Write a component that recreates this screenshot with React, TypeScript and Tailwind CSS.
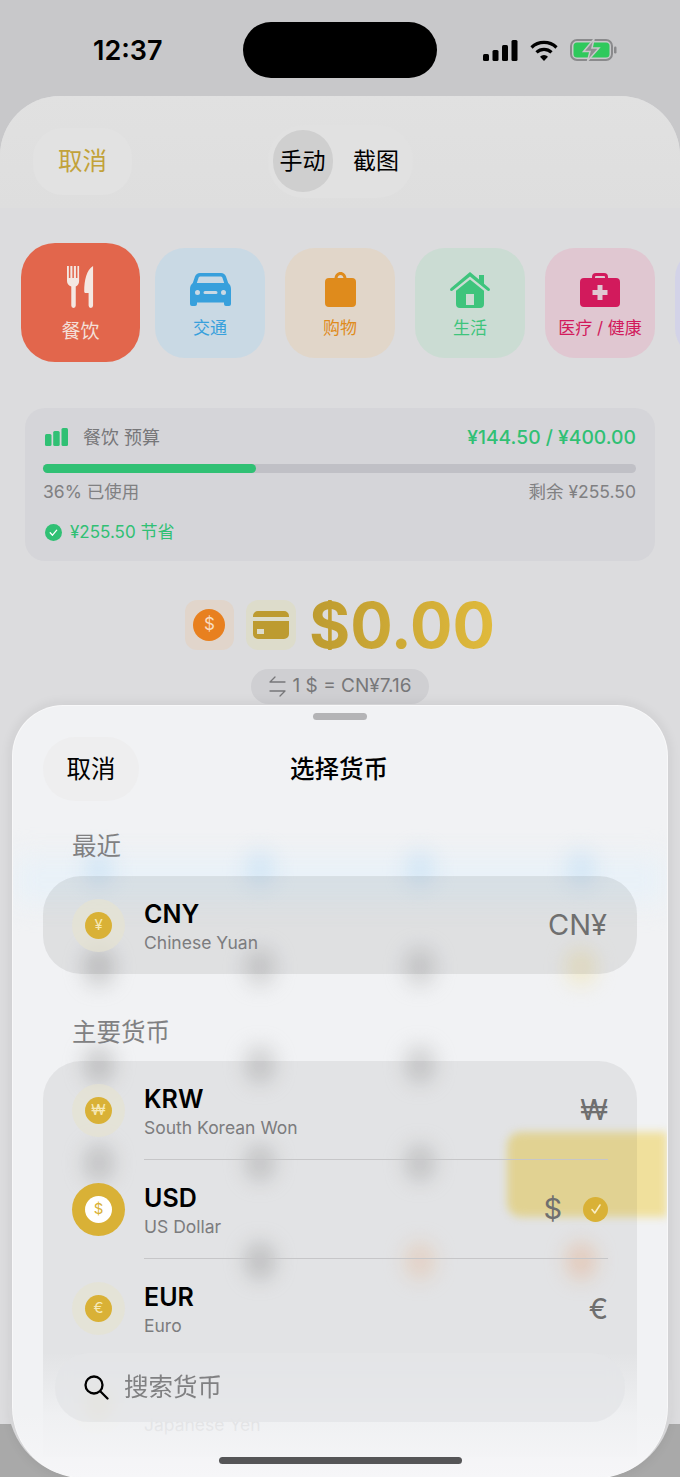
import React from 'react';

const font = "font-['Inter','Noto_Sans_CJK_SC',sans-serif]";

type Currency = { code: string; name: string; symbol: string; selected?: boolean };

const currencies: Currency[] = [
    { code: 'KRW', name: 'South Korean Won', symbol: '₩' },
    { code: 'USD', name: 'US Dollar', symbol: '$', selected: true },
    { code: 'EUR', name: 'Euro', symbol: '€' },
    { code: '', name: 'Japanese Yen', symbol: '' },
];

const blobs = [
    'bg-[#bcdcf4]', 'bg-[#bcdcf4]', 'bg-[#bcdcf4]', 'bg-[#bcdcf4]',
    'bg-[#a0a0a0]', 'bg-[#b0b0b0]', 'bg-[#b0b0b0]', 'bg-[#f0e0a0]',
    'bg-[#a0a0a0]', 'bg-[#a8a8a8]', 'bg-[#a8a8a8]', 'bg-transparent',
    'bg-[#a8a8a8]', 'bg-[#a8a8a8]', 'bg-[#a8a8a8]', 'bg-transparent',
    'bg-transparent', 'bg-[#a0a0a0]', 'bg-[#f5c8a8]', 'bg-[#f5b890]',
];

const ForkKnife = () => (
    <svg width="27" height="42" viewBox="0 0 29 42" fill="#f4e8e2" preserveAspectRatio="none">
        <path d="M0 0h2v12h1.6V0h2.2v12h1.6V0h2.2v12h1.6V0H13v15c0 3-1.6 4.8-3.6 5.6V39.500a2.400 2.400 0 0 1-4.800 0V20.600C2 19.800 0 18 0 15z" />
        <path d="M28 0v39.500a2.400 2.400 0 0 1-4.800 0V27h-3.200c-1 0-1.500-.6-1.500-1.500C18.500 14 21 4 28 0z" />
    </svg>
);

const Car = () => (
    <svg width="41" height="33" viewBox="0 0 41 33" fill="#37a0dc">
        <path fillRule="evenodd" d="M10 0h21c2.500 0 4 1.200 5 3.500L38.200 10c1.800 1.400 2.800 3.500 2.800 6v15a2 2 0 0 1-2 2h-3a2 2 0 0 1-2-2v-1.500H7V31a2 2 0 0 1-2 2H2a2 2 0 0 1-2-2V16c0-2.500 1-4.600 2.800-6L5 3.500C6 1.200 7.500 0 10 0zm.5 3.500c-1 0-1.700.5-2 1.500L6.800 10h27.400L32.500 5c-.3-1-1-1.500-2-1.500zM7.500 17a2.500 2.500 0 1 0 0 5 2.500 2.500 0 0 0 0-5zm26 0a2.500 2.500 0 1 0 0 5 2.500 2.500 0 0 0 0-5zM15 18a1.500 1.500 0 0 0 0 3h11a1.500 1.500 0 0 0 0-3z" />
    </svg>
);

const Bag = () => (
    <svg width="31" height="35" viewBox="0 0 31 35" fill="#df8b1c">
        <path fillRule="evenodd" d="M9.500 6C10 2.500 12.300 0 15.500 0s5.500 2.500 6 6H27a4 4 0 0 1 4 4v21a4 4 0 0 1-4 4H4a4 4 0 0 1-4-4V10a4 4 0 0 1 4-4zm3 0h6c-.4-1.700-1.500-3-3-3s-2.600 1.300-3 3z" />
    </svg>
);

const House = () => (
    <svg width="40" height="36" viewBox="0 0 40 36" fill="#3ec47c">
        <path d="M20 0l9 7.500V3h5v8.700l5.300 4.500c.8.700.9 1.700.3 2.300-.6.700-1.600.7-2.300.1L20 4.500 2.700 18.600c-.7.600-1.700.6-2.300-.1-.6-.6-.5-1.600.3-2.300z" />
        <path fillRule="evenodd" d="M20 7.500l14 11.300V32a4 4 0 0 1-4 4H10a4 4 0 0 1-4-4V18.800zM16 22v11h8V22z" />
    </svg>
);

const Medical = () => (
    <svg width="40" height="34" viewBox="0 0 40 34" fill="#d21a5c">
        <path fillRule="evenodd" d="M12 5V4a4 4 0 0 1 4-4h8a4 4 0 0 1 4 4v1h8a4 4 0 0 1 4 4v21a4 4 0 0 1-4 4H4a4 4 0 0 1-4-4V9a4 4 0 0 1 4-4zm3 0h10V4a1 1 0 0 0-1-1h-8a1 1 0 0 0-1 1zm2.500 7v5h-5v5h5v5h5v-5h5v-5h-5v-5z" />
    </svg>
);

const tiles = [
    { label: '交通', icon: <Car />, bg: 'bg-[#c9d9e4]', text: 'text-[#37a0dc]' },
    { label: '购物', icon: <Bag />, bg: 'bg-[#e1d6c9]', text: 'text-[#df8b1c]' },
    { label: '生活', icon: <House />, bg: 'bg-[#cbdcd3]', text: 'text-[#3ec47c]' },
    { label: '医疗 / 健康', icon: <Medical />, bg: 'bg-[#e0c7d1]', text: 'text-[#d21a5c]' },
    { label: '', icon: null, bg: 'bg-[#d3d3e8]', text: 'text-[#6060d0]' },
];

const Coin = ({ symbol, selected }: { symbol: string; selected?: boolean }) => (
    <div className={`flex h-[53px] w-[53px] shrink-0 items-center justify-center rounded-full ${selected ? 'bg-[#d9b136]' : 'bg-[#e6e3d2]/70'}`}>
        <div className={`flex h-[27px] w-[27px] items-center justify-center rounded-full text-[15px] ${selected ? 'bg-white text-[#d9b136]' : 'bg-[#d9b136] text-[#f6e9b8]'}`}>
            {symbol}
        </div>
    </div>
);

const CurrencyRow = ({ currency, last }: { currency: Currency; last?: boolean }) => (
    <div className="flex h-[99px] items-center gap-[19px] pl-[29px] pr-[29px]">
        <Coin symbol={currency.symbol} selected={currency.selected} />
        <div className={`flex h-full flex-1 items-center justify-between ${last ? '' : 'border-b border-[#c6c6c8]'}`}>
            <div className="flex flex-col pt-[6px]">
                <span className="h-[29px] text-[25px] font-semibold leading-[29px] text-black">{currency.code}</span>
                <span className="text-[17.500px] leading-[28px] text-[#7c7c7e]">{currency.name}</span>
            </div>
            <div className="flex items-center gap-[21px]">
                <span className="text-[29px] text-[#6f6f6f]">{currency.symbol}</span>
                {currency.selected && (
                    <div className="flex h-[25px] w-[25px] items-center justify-center rounded-full bg-[#d9b136]">
                        <svg width="14" height="14" viewBox="0 0 14 14" fill="none" stroke="#f8edc4" strokeWidth="1.600" strokeLinecap="round" strokeLinejoin="round">
                            <path d="M3 7.500l2.800 3.500L11 3" />
                        </svg>
                    </div>
                )}
            </div>
        </div>
    </div>
);

const App: React.FC = () => {
    return (
        <div className={`relative flex h-[1477px] w-[680px] flex-col overflow-hidden bg-[#a9a9a9] ${font}`}>
            <div className="bg-[#c8c8ca]">
                {/* Status bar */}
                <div className="flex h-[96px] items-start pl-[93px] pr-[63px] pt-[22px]">
                    <span className="w-[150px] text-[27px] font-semibold leading-[58px] text-black">12:37</span>
                    <div className="h-[56px] w-[194px] rounded-[28px] bg-black" />
                    <div className="ml-auto flex h-[56px] items-center gap-[12px]">
                        <svg width="35" height="21" viewBox="0 0 35 21" fill="#000">
                            <rect x="0" y="14" width="6" height="7" rx="1.500" />
                            <rect x="9.500" y="10" width="6" height="11" rx="1.500" />
                            <rect x="19" y="5" width="6" height="16" rx="1.500" />
                            <rect x="28.500" y="0" width="6" height="21" rx="1.500" />
                        </svg>
                        <svg width="28" height="21" viewBox="0 0 28 21" fill="none" stroke="#000" strokeWidth="3.200">
                            <path d="M1.500 7.500a18 18 0 0 1 25 0" />
                            <path d="M6.500 12.300a11 11 0 0 1 15 0" />
                            <path d="M14 21l-4-4.300a5.500 5.500 0 0 1 8 0z" fill="#000" stroke="none" />
                        </svg>
                        <svg width="47" height="22" viewBox="0 0 47 22" fill="none">
                            <rect x="1" y="1" width="41" height="20" rx="6" stroke="#8a8a8c" strokeWidth="2" />
                            <rect x="3.500" y="3.500" width="36" height="15" rx="3.500" fill="#2fc95c" />
                            <rect x="44" y="7.500" width="2.500" height="7" rx="1.200" fill="#8a8a8c" />
                            <path d="M24 0L13.500 12.500H20L17.500 22 29 9h-7z" fill="#8f8f92" stroke="#c8c8ca" strokeWidth="1.500" />
                        </svg>
                    </div>
                </div>

                {/* Entry form behind the sheet */}
                <div className="flex h-[1328px] flex-col overflow-hidden rounded-t-[60px] bg-[#dcdcde]">
                    <div className="grid h-[112px] shrink-0 grid-cols-[1fr_145px_1fr] items-center bg-gradient-to-b from-[#e1e1e1] to-[#dedede] pl-[33px] pr-[33px] pt-[18px]">
                        <div className="flex h-[67px] w-[99px] items-center justify-center rounded-[30px] bg-[#e2e2e2] text-[24.500px] text-[#c2a23a]">
                            取消
                        </div>
                        <div className="flex h-[73px] items-center rounded-[36px] bg-[#e1e1e1] px-[5px] text-[23px] text-black">
                            <div className="flex h-[62px] w-[60px] items-center justify-center rounded-full bg-[#cfcfcf]">手动</div>
                            <div className="flex flex-1 items-center justify-center pl-[12px]">截图</div>
                        </div>
                    </div>

                    {/* Categories */}
                    <div className="mt-[35px] flex items-center gap-[20px] overflow-hidden pl-[21px]">
                        <div className="mr-[-5px] flex h-[119px] w-[119px] shrink-0 flex-col items-center rounded-[34px] bg-[#e2664c] pt-[23px]">
                            <ForkKnife />
                            <span className="mt-[12px] text-[19px] leading-[24px] text-[#f4e0da]">餐饮</span>
                        </div>
                        {tiles.map((tile, i) => (
                            <div key={i} className={`flex h-[110px] w-[110px] shrink-0 flex-col items-center rounded-[30px] pt-[24px] ${tile.bg}`}>
                                <div className="flex h-[36px] items-center">{tile.icon}</div>
                                <span className={`mt-[8px] whitespace-nowrap text-[17px] leading-[24px] ${tile.text}`}>{tile.label}</span>
                            </div>
                        ))}
                    </div>

                    {/* Budget */}
                    <div className="mx-[25px] mt-[46px] flex h-[153px] shrink-0 flex-col rounded-[20px] bg-[#d5d5d9] pl-[18px] pr-[19px] pt-[15px]">
                        <div className="flex h-[28px] items-center justify-between">
                            <div className="flex items-center gap-[15px] pl-[2px] text-[18px] text-[#777779]">
                                <svg width="23" height="18" viewBox="0 0 23 18" fill="#30c074">
                                    <rect x="0" y="6" width="6.500" height="12" rx="1.500" />
                                    <rect x="8.200" y="3" width="6.500" height="15" rx="1.500" />
                                    <rect x="16.500" y="0" width="6.500" height="18" rx="1.500" />
                                </svg>
                                <span>餐饮 预算</span>
                            </div>
                            <span className="text-[19.300px] font-medium text-[#30c074]">¥144.50 / ¥400.00</span>
                        </div>
                        <div className="mt-[13px] h-[9px] rounded-full bg-[#c0c0c6]">
                            <div className="h-full w-[36%] rounded-full bg-[#30c074]" />
                        </div>
                        <div className="mt-[7px] flex justify-between text-[17.500px] leading-[24px] text-[#808082]">
                            <span>36% 已使用</span>
                            <span>剩余 ¥255.50</span>
                        </div>
                        <div className="mt-[16px] flex items-center gap-[8px] pl-[2px] text-[17px] leading-[24px] text-[#30c074]">
                            <svg width="17" height="17" viewBox="0 0 17 17">
                                <circle cx="8.500" cy="8.500" r="8.500" fill="#30c074" />
                                <path d="M5.200 8.800l2.300 2.400 4.200-5" fill="none" stroke="#fff" strokeWidth="1.300" strokeLinecap="round" strokeLinejoin="round" />
                            </svg>
                            <span>¥255.50 节省</span>
                        </div>
                    </div>

                    {/* Amount */}
                    <div className="mt-[39px] flex shrink-0 items-center justify-center">
                        <div className="flex h-[50px] w-[49px] items-center justify-center rounded-[12px] bg-[#e1d5cb]">
                            <div className="flex h-[32px] w-[32px] items-center justify-center rounded-full bg-[#e8801f] text-[17px] text-[#f8dcc0]">$</div>
                        </div>
                        <div className="ml-[12px] flex h-[50px] w-[50px] items-center justify-center rounded-[12px] bg-[#dddccb]">
                            <svg width="36" height="28" viewBox="0 0 36 28" fill="#bd9b30">
                                <path fillRule="evenodd" d="M5 0h26a5 5 0 0 1 5 5v1H0V5a5 5 0 0 1 5-5zM0 10h36v13a5 5 0 0 1-5 5H5a5 5 0 0 1-5-5zm4 8v5h7v-5z" />
                            </svg>
                        </div>
                        <span className="ml-[13px] bg-gradient-to-r from-[#bd9b30] to-[#e0ba3c] bg-clip-text text-[63px] font-bold leading-[50px] text-transparent">
                            $0.00
                        </span>
                    </div>

                    {/* Rate */}
                    <div className="mx-auto mt-[19px] flex h-[35px] w-[178px] shrink-0 items-center justify-center gap-[7px] rounded-full bg-[#cfcfd2] text-[19px] text-[#777779]">
                        <svg width="17" height="21" viewBox="0 0 17 21" fill="none" stroke="#777779" strokeWidth="1.300" strokeLinecap="round" strokeLinejoin="round">
                            <path d="M16 6H1l5-5" />
                            <path d="M1 15h15l-5 5" />
                        </svg>
                        <span>1 $ = CN¥7.16</span>
                    </div>
                </div>
            </div>

            {/* Lighter rim under the sheet's bottom corners */}
            <div className="absolute bottom-0 left-[8px] right-[8px] top-[1380px] rounded-b-[74px] bg-[#dedee0]" />

            {/* Currency sheet */}
            <div className="absolute bottom-0 left-[13px] right-[13px] top-[706px] overflow-hidden rounded-b-[70px] rounded-t-[50px] bg-[#f1f2f4] shadow-[0_0_0_1px_#f8f8f9,0_0_10px_5px_rgba(0,0,0,0.05)]">
                {/* Keypad showing through the glass */}
                <div className="absolute left-0 right-0 top-[152px] h-[44px] bg-[#e8f1f8] blur-[14px]" />
                <div className="absolute left-[67px] top-[144px] grid w-[520px] grid-cols-4 gap-x-[122px] gap-y-[60px] blur-[10px]">
                    {blobs.map((color, i) => (
                        <div key={i} className={`h-[38px] w-[30px] justify-self-center rounded-full opacity-45 ${color}`} />
                    ))}
                </div>
                <div className="absolute right-0 top-[426px] h-[85px] w-[160px] rounded-l-[14px] bg-[#f0e09c] blur-[4px]" />

                <div className="relative flex h-full flex-col">
                    <div className="mx-auto mt-[7px] h-[7px] w-[54px] shrink-0 rounded-full bg-[#b4b4b6]" />
                    <div className="relative mt-[17px] flex h-[64px] shrink-0 items-center justify-center">
                        <div className="absolute left-[30px] flex h-[64px] w-[96px] items-center justify-center rounded-[32px] bg-[#eeeeef] text-[24.500px] text-black">
                            取消
                        </div>
                        <span className="pr-[2px] text-[24.500px] font-medium text-black">选择货币</span>
                    </div>

                    <div className="ml-[59px] mt-[28px] text-[24.500px] leading-[34px] text-[#808082]">最近</div>
                    <div className="mx-[30px] mt-[13px] flex h-[98px] shrink-0 items-center gap-[19px] rounded-[38px] bg-black/[0.075] pl-[29px] pr-[30px]">
                        <Coin symbol="¥" />
                        <div className="flex flex-col pt-[6px]">
                            <span className="text-[25px] font-semibold leading-[29px] text-black">CNY</span>
                            <span className="text-[17.500px] leading-[28px] text-[#7c7c7e]">Chinese Yuan</span>
                        </div>
                        <span className="ml-auto text-[29px] text-[#6f6f6f]">CN¥</span>
                    </div>

                    <div className="ml-[59px] mt-[41px] text-[24.500px] leading-[34px] text-[#808082]">主要货币</div>
                    <div className="mx-[30px] mt-[12px] shrink-0 rounded-t-[38px] bg-black/[0.06]">
                        {currencies.map((currency, i) => (
                            <CurrencyRow key={currency.name} currency={currency} last={i >= 2} />
                        ))}
                    </div>
                </div>

                {/* Fade + search */}
                <div className="absolute bottom-0 left-0 right-0 h-[125px] bg-gradient-to-b from-[#f1f2f4]/0 via-[#f1f2f4]/85 to-[#f6f6f8]" />
                <div className="absolute bottom-[55px] left-[42px] right-[42px] flex h-[69px] items-center gap-[15px] rounded-[34px] bg-[#e4e5e7]/80 pl-[29px] text-[24.500px] text-[#808082] backdrop-blur-sm">
                    <svg width="25" height="25" viewBox="0 0 25 25" fill="none" stroke="#000" strokeWidth="2.300" strokeLinecap="round">
                        <circle cx="10" cy="10" r="8.500" />
                        <path d="M16.500 16.500L23.500 23.500" />
                    </svg>
                    <span>搜索货币</span>
                </div>
                <div className="absolute bottom-[13px] left-[206px] h-[7px] w-[243px] rounded-full bg-[#555557]" />
            </div>
        </div>
    );
};

export default App;
